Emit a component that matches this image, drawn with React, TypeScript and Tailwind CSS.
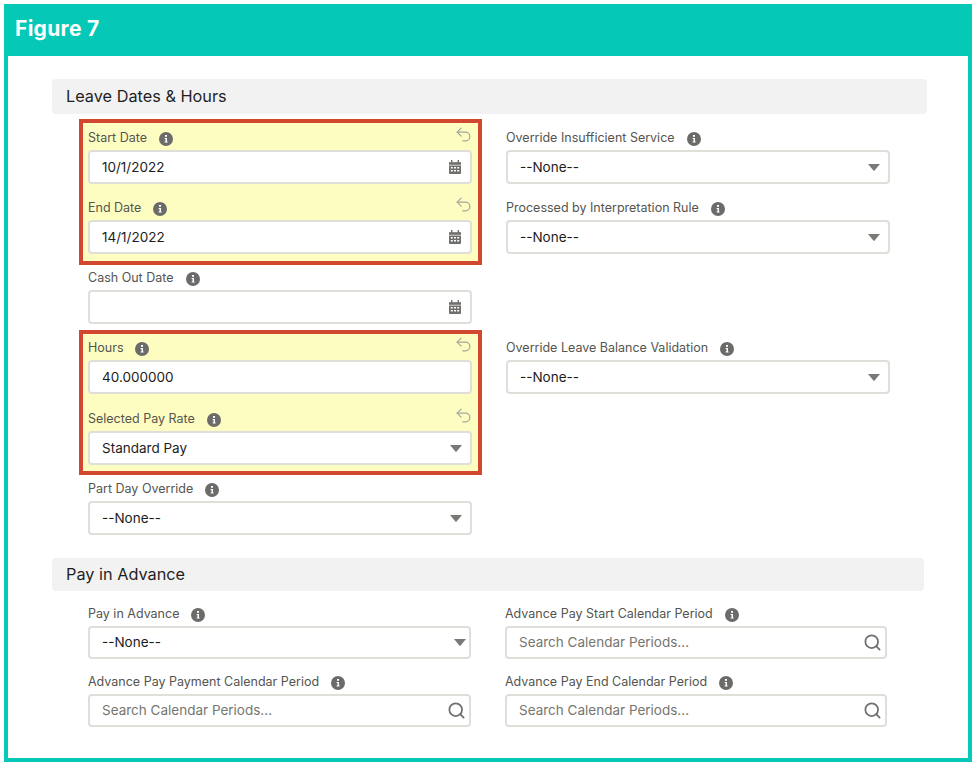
import { Search, Undo2 } from "lucide-react";

function InfoIcon() {
  return (
    <svg viewBox="0 0 14 14" className="ml-3 h-[14px] w-[14px] shrink-0">
      <circle cx="7" cy="7" r="7" fill="#6b6b69" />
      <rect x="6" y="3" width="2" height="1.8" fill="#fff" />
      <path d="M5.6 6h2.4v3.6h.6v1H5.6v-1h.9V7h-.9z" fill="#fff" />
    </svg>
  );
}

function CalendarIcon() {
  return (
    <svg viewBox="0 0 14 14" className="h-[14px] w-[14px]">
      <rect x="3" y="0" width="1.4" height="3" fill="#706e6b" />
      <rect x="9.6" y="0" width="1.4" height="3" fill="#706e6b" />
      <path d="M1 2.2h12v2.6H1z" fill="#706e6b" />
      <path
        fillRule="evenodd"
        d="M1 5.4h12V13a1 1 0 0 1-1 1H2a1 1 0 0 1-1-1zM2.8 7v1.6h2V7zm3.2 0v1.6h2V7zm3.2 0v1.6h2V7zM2.8 10v1.6h2V10zm3.2 0v1.6h2V10zm3.2 0v1.6h2V10z"
        fill="#706e6b"
      />
    </svg>
  );
}

function Caret() {
  return (
    <svg viewBox="0 0 12 7" className="h-[7px] w-[12px]">
      <path d="M0 0h12L6.6 6.6a.8.8 0 0 1-1.2 0z" fill="#7b7976" />
    </svg>
  );
}

type FieldProps = {
  label: string;
  value?: string;
  placeholder?: string;
  icon?: "calendar" | "caret" | "search";
  changed?: boolean;
  small?: boolean;
  className?: string;
};

function Field({
  label,
  value,
  placeholder,
  icon,
  changed,
  small,
  className = "",
}: FieldProps) {
  return (
    <div className={className}>
      <div className="flex h-[25px] items-start justify-between pt-[5.5px]">
        <div className="flex h-[16px] items-center text-[12.5px] text-[#55554f]">
          <span>{label}</span>
          <InfoIcon />
        </div>
        {changed && (
          <Undo2
            size={19}
            strokeWidth={1.5}
            className="-mr-px -mt-[6px] text-[#a5a69a]"
          />
        )}
      </div>
      <div
        className={`flex items-center justify-between rounded border-2 border-[#e0ded8] bg-white pl-[12px] ${
          small ? "h-[33px] pr-[3px]" : "h-[34px] pr-[8px]"
        }`}
      >
        {placeholder ? (
          <span className="text-[13.5px] text-[#76766f]">{placeholder}</span>
        ) : (
          <span className="text-[13.5px] text-[#1c1c1c]">{value}</span>
        )}
        {icon === "calendar" && <CalendarIcon />}
        {icon === "caret" && <Caret />}
        {icon === "search" && (
          <Search size={19} strokeWidth={2.2} className="text-[#706e6b]" />
        )}
      </div>
    </div>
  );
}

function SectionHeader({ title, className }: { title: string; className: string }) {
  return (
    <div
      className={`flex items-center rounded bg-[#f3f2f2] pb-px pl-[14px] text-[16.3px] text-[#1f1f1f] ${className}`}
    >
      {title}
    </div>
  );
}

export default function App() {
  return (
    <div className="h-[766px] bg-white p-1 font-['Inter',sans-serif]">
      <div className="h-[758px] border-4 border-t-0 border-[#05c8b7] bg-white">
        <div className="-mx-1 flex h-[52px] items-center bg-[#05c8b7] pb-[3px] pl-[11px] text-[21px] font-bold tracking-[0.3px] text-white">
          Figure 7
        </div>

        <div className="pl-[44px] pt-[23px]">
          <SectionHeader title="Leave Dates & Hours" className="h-[35px] w-[875px]" />

          <div className="ml-[27px] grid grid-cols-[403px_384px] gap-x-6">
            <div>
              <div className="mt-[5px] border-4 border-[#d2472f] bg-[#fdfdc2] pb-[7px] pl-[5px] pr-[6px] pt-[2px]">
                <Field label="Start Date" value="10/1/2022" icon="calendar" changed />
                <Field
                  label="End Date"
                  value="14/1/2022"
                  icon="calendar"
                  changed
                  className="mt-[11px]"
                />
              </div>
              <Field label="Cash Out Date" icon="calendar" className="ml-[9px] w-[384px]" />
              <div className="mt-[6px] border-4 border-[#d2472f] bg-[#fdfdc2] pb-[6px] pl-[5px] pr-[6px] pt-[1px]">
                <Field label="Hours" value="40.000000" changed />
                <Field
                  label="Selected Pay Rate"
                  value="Standard Pay"
                  icon="caret"
                  changed
                  className="mt-[12px]"
                />
              </div>
              <Field
                label="Part Day Override"
                value="--None--"
                icon="caret"
                className="ml-[9px] mt-px w-[384px]"
              />
            </div>

            <div className="pt-[11px]">
              <Field label="Override Insufficient Service" value="--None--" icon="caret" />
              <Field
                label="Processed by Interpretation Rule"
                value="--None--"
                icon="caret"
                className="mt-[11px]"
              />
              <Field
                label="Override Leave Balance Validation"
                value="--None--"
                icon="caret"
                className="mt-[81px]"
              />
            </div>
          </div>

          <SectionHeader title="Pay in Advance" className="mt-[23px] h-[33px] w-[872px]" />

          <div className="ml-[36px] grid w-[799px] grid-cols-[383px_382px] gap-x-[34px] gap-y-[10px] pt-[10px]">
            <Field label="Pay in Advance" value="--None--" icon="caret" small />
            <Field
              label="Advance Pay Start Calendar Period"
              placeholder="Search Calendar Periods..."
              icon="search"
              small
            />
            <Field
              label="Advance Pay Payment Calendar Period"
              placeholder="Search Calendar Periods..."
              icon="search"
              small
            />
            <Field
              label="Advance Pay End Calendar Period"
              placeholder="Search Calendar Periods..."
              icon="search"
              small
            />
          </div>
        </div>
      </div>
    </div>
  );
}
